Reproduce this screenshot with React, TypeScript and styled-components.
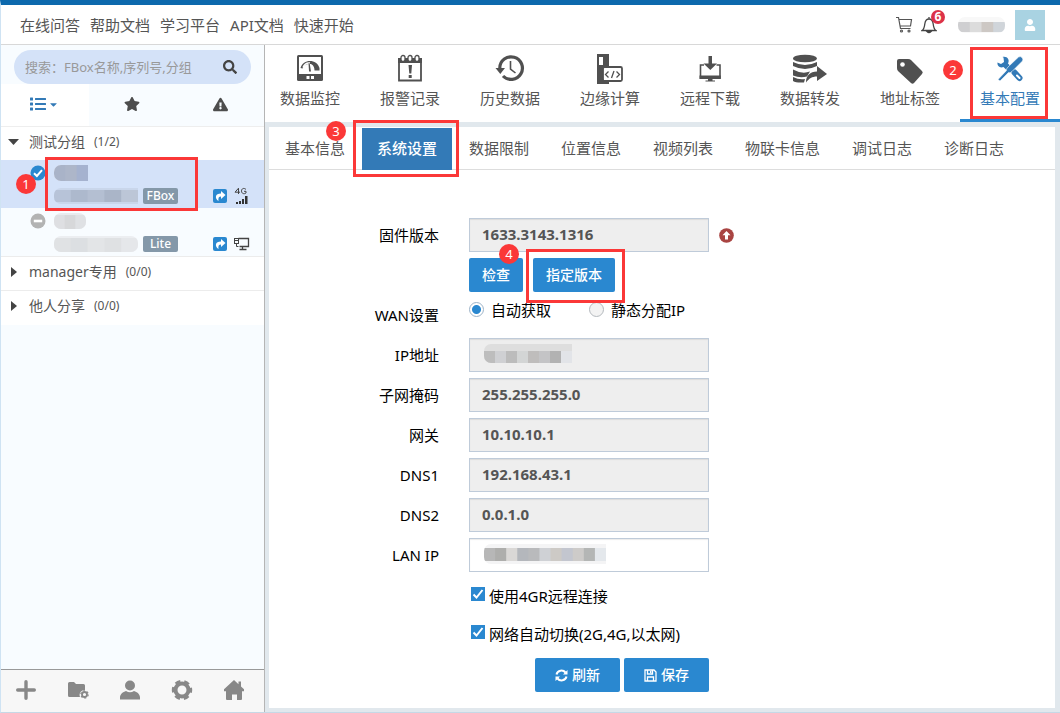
import React from 'react';
import styled, { createGlobalStyle, css } from 'styled-components';
import { FaSearch, FaStar, FaExclamationTriangle, FaList, FaCaretDown, FaUser } from 'react-icons/fa';

const Global = createGlobalStyle`
  *, *::before, *::after { box-sizing: border-box; }
  html, body, #root { height: 100%; }
  body {
    margin: 0;
    background: #e1e8ed;
    color: #555;
    font: 15px/20px "Noto Sans", "Noto Sans CJK SC", sans-serif;
  }
  button, input { font: inherit; color: inherit; }
  button { border: 0; padding: 0; background: none; cursor: pointer; }
  svg { display: block; flex: none; }
`;

const Page = styled.div`
  display: flex;
  flex-direction: column;
  min-height: 100%;
  border-top: 5px solid #0d69ad;
  border-left: 1px solid #cfe3f3;
  border-bottom: 1px solid #c6d8e6;
`;

const Header = styled.header`
  display: flex;
  align-items: center;
  justify-content: space-between;
  height: 40px;
  padding: 0 15px 0 19px;
  background: #fff;
  border-bottom: 1px solid #d8d8d8;
`;

const HeaderLinks = styled.nav`
  display: flex;
  gap: 10px;
  a { color: #555; text-decoration: none; }
`;

const HeaderTools = styled.div`
  display: flex;
  align-items: center;
`;

const Bell = styled.button`
  position: relative;
  margin: 0 21px 0 8px;
`;

const Count = styled.span`
  position: absolute;
  top: -6px;
  left: 10px;
  width: 14px;
  height: 14px;
  border-radius: 50%;
  background: #dc3148;
  color: #fff;
  font-size: 12px;
  font-weight: 700;
  line-height: 14px;
  text-align: center;
`;

const Avatar = styled.span`
  display: grid;
  place-items: center;
  width: 30px;
  height: 30px;
  margin-left: 10px;
  background: #a9d3e2;
  color: #fff;
`;

const Body = styled.div`
  display: flex;
  flex: 1;
`;

const Sidebar = styled.aside`
  display: flex;
  flex-direction: column;
  flex: none;
  width: 264px;
  background: #f8fcff;
  border-right: 1px solid #b5b5b5;
`;

const Search = styled.label`
  display: flex;
  align-items: center;
  height: 34px;
  margin: 5px 13px 0;
  padding: 0 14px 0 11px;
  border-radius: 17px;
  background: #d4e2f8;
  input {
    flex: 1;
    min-width: 0;
    border: 0;
    padding: 0;
    outline: 0;
    background: none;
    font-size: 13px;
  }
  input::placeholder { color: #999; opacity: 1; }
`;

const Filters = styled.div`
  display: grid;
  grid-template-columns: repeat(3, 1fr);
  height: 43px;
  border-bottom: 1px solid #eee;
`;

const Filter = styled.button<{ $active?: boolean }>`
  display: flex;
  align-items: center;
  justify-content: center;
  gap: 2px;
  padding-bottom: 2px;
  background: ${p => (p.$active ? '#fff' : 'none')};
  color: ${p => (p.$active ? '#337ab7' : '#4d4d4d')};
`;

const Group = styled.button<{ $open?: boolean }>`
  display: flex;
  align-items: center;
  width: 100%;
  height: ${p => (p.$open ? '33px' : '34px')};
  padding: 0 0 3px 6px;
  background: #fff;
  border-bottom: ${p => (p.$open ? '0' : '1px')} solid #ececec;
  font-size: 14px;
  &:nth-last-child(2) { border-bottom-color: #fff; }
  svg { width: 12px; margin-right: 10px; }
  small { margin-left: 9px; font-size: 12px; }
`;

const Devices = styled.div`
  border-bottom: 1px solid #ececec;
`;

const Device = styled.div<{ $active?: boolean }>`
  position: relative;
  display: grid;
  grid-template-columns: 24px 89px 35px 1fr 21px 16px;
  grid-template-rows: 16px 16px;
  row-gap: 7px;
  height: 48px;
  padding: 5px 14px 0 29px;
  background: ${p => (p.$active ? '#d4e2f9' : '#f8fcff')};
  > :nth-child(2) { grid-column: 2 / 7; }
  > :nth-child(3) { grid-column: 2; }
  > :nth-child(4) { grid-column: 3; }
  > :nth-child(5) { grid-column: 5; }
  > :nth-child(6) { grid-column: 6; }
`;

const DeviceIcon = styled.span`
  display: flex;
  align-items: center;
`;

const Kind = styled.span`
  height: 16px;
  border-radius: 2px;
  background: #8498a9;
  color: #fff;
  font-size: 12px;
  font-weight: 500;
  line-height: 16px;
  text-align: center;
`;

const SideActions = styled.div`
  display: grid;
  grid-template-columns: repeat(5, 1fr);
  height: 43px;
  margin-top: auto;
  padding: 0 3px 2px 0;
  border-top: 1px solid #999;
  background: #f7f7f7;
  color: #888;
  button { display: grid; place-items: center; padding-right: 3px; }
`;

const Main = styled.main`
  display: flex;
  flex-direction: column;
  flex: 1;
  min-width: 0;
`;

const Tools = styled.nav`
  background: #fff;
  height: 77px;
  ul {
    display: flex;
    height: 100%;
    margin: 0 0 0 -5px;
    padding: 0;
    list-style: none;
  }
`;

const Tool = styled.li<{ $active?: boolean }>`
  position: relative;
  flex: 1;
  a {
    display: flex;
    flex-direction: column;
    align-items: center;
    height: 100%;
    padding-top: 9px;
    text-decoration: none;
    color: ${p => (p.$active ? '#337ab7' : '#555')};
    border-bottom: 3px solid ${p => (p.$active ? '#2a88d0' : 'transparent')};
  }
  svg { margin-bottom: 2px; }
`;

const Panel = styled.section`
  flex: 1;
  margin: 5px 5px 4px 4px;
  background: #fff;
`;

const Tabs = styled.div`
  display: flex;
  height: 43px;
  padding: 1px 0 0 1px;
  gap: 2px;
  border-bottom: 1px solid #ddd;
`;

const TabCell = styled.div`
  position: relative;
  display: flex;
`;

const Tab = styled.button<{ $active?: boolean }>`
  padding: 0 15px 2px;
  height: 42px;
  white-space: nowrap;
  ${p => p.$active && css`
    background: #337ab7;
    color: #fff;
    font-weight: 500;
  `}
`;

const Form = styled.form`
  display: flex;
  flex-direction: column;
  gap: 6px;
  padding-top: 48px;
  color: #000;
`;

const Row = styled.div`
  display: grid;
  grid-template-columns: 170px 240px 16px;
  column-gap: 30px;
  align-items: center;
  min-height: 34px;
  > label, > span:first-child { text-align: right; }
  > svg { margin-left: -20px; }
`;

const Field = styled.div`
  position: relative;
  grid-column: 2;
  > svg { position: absolute; top: 6px; left: 15px; }
`;

const Text = styled.input`
  width: 100%;
  height: 34px;
  padding: 0 12px 2px;
  border: 1px solid #bfcbd9;
  background: #fff;
  box-shadow: inset 0 1px 1px rgba(0, 0, 0, 0.08);
  color: #555;
  font-size: 15px;
  font-weight: 700;
  display: block;
  &:read-only { background: #eee; }
`;

const Buttons = styled.div<{ $end?: boolean }>`
  grid-column: 2;
  display: flex;
  gap: ${p => (p.$end ? '4px' : '10px')};
  justify-content: ${p => (p.$end ? 'flex-end' : 'flex-start')};
`;

const ButtonCell = styled.div`
  position: relative;
`;

const Button = styled.button<{ $wide?: boolean }>`
  display: flex;
  align-items: center;
  justify-content: center;
  gap: 4px;
  height: 34px;
  padding: 0 13px;
  min-width: ${p => (p.$wide ? '85px' : '54px')};
  border-radius: 2px;
  background: #2a88d0;
  color: #fff;
  font-size: 14px;
  font-weight: 500;
`;

const Radios = styled.div`
  display: flex;
  gap: 38px;
  height: 34px;
  padding-top: 2px;
  label { display: flex; gap: 7px; white-space: nowrap; }
`;

const Radio = styled.input`
  appearance: none;
  width: 15px;
  height: 15px;
  margin: 2px 0 0;
  border: 1px solid #b4b9be;
  border-radius: 50%;
  background: #f3f3f3;
  &:checked { background: radial-gradient(circle, #2a88d0 0 4px, #fff 5px); border-color: #9db3c8; }
`;

const Check = styled.label`
  display: flex;
  align-items: flex-end;
  gap: 4px;
  grid-column: 2 / 4;
  padding: 1px 0 0 2px;
`;

const Tick = styled.span`
  display: grid;
  width: 14px;
  height: 14px;
  margin-bottom: 5px;
  > * { grid-area: 1 / 1; }
  input { appearance: none; margin: 0; border: 1px solid #2a88d0; }
  input:checked { background: #2a88d0; }
  svg { pointer-events: none; }
`;

const Checks = styled.div`
  display: flex;
  flex-direction: column;
  gap: 4px;
  margin-bottom: 2px;
`;

const Frame = styled.span<{ $top: number; $right: number; $bottom: number; $left: number }>`
  position: absolute;
  z-index: 2;
  top: ${p => p.$top}px;
  right: ${p => p.$right}px;
  bottom: ${p => p.$bottom}px;
  left: ${p => p.$left}px;
  border: 3px solid #fb3838;
  pointer-events: none;
`;

const Step = styled.span<{ $top: number; $left: number }>`
  position: absolute;
  z-index: 3;
  top: ${p => p.$top}px;
  left: ${p => p.$left}px;
  width: 20px;
  height: 20px;
  border-radius: 50%;
  background: #fb3838;
  color: #fff;
  font-size: 13px;
  line-height: 20px;
  text-align: center;
`;

/* Masked value: a strip of flat tiles over a paler strip, rounded on the left. */
function Mask({ width, height, tiles, top = 2, bottom = 0, halo = '#ececec', round }: {
  width: number; height: number; tiles: string[]; top?: number; bottom?: number; halo?: string; round?: boolean;
}) {
  const id = React.useId();
  const w = width / tiles.length;
  return (
    <svg width={width} height={height} aria-hidden="true">
      <clipPath id={id}><rect width={round ? width : width + 10} height={height} rx="7" /></clipPath>
      <g clipPath={`url(#${id})`}>
        <rect width={width} height={height} fill={halo} />
        {tiles.map((c, i) => (
          <rect key={i} x={i * w} y={top} width={w + 1} height={height - top - bottom} fill={c} />
        ))}
      </g>
    </svg>
  );
}

const Caret = ({ open }: { open?: boolean }) => (
  <svg height="12" viewBox="0 0 12 12" fill="#444"><path d={open ? 'M1 3h11L6.500 9z' : 'M4 1v10l6-5z'} /></svg>
);

const Share = () => (
  <svg width="14" height="14" viewBox="0 0 14 14">
    <rect width="14" height="14" rx="2" fill="#2a88d0" />
    <path d="M8 2 12.500 6 8 10V7.600C5.800 7.600 5 9 5.500 12 1.500 9 2 4.400 8 4.400z" fill="#fff" />
  </svg>
);

const Signal = () => (
  <svg width="16" height="18" viewBox="0 0 16 18">
    <path d="M4.500 7V1.200L1 5.200h5M12 2.500C10 .5 7.500 1.500 7.500 4s2.500 3.500 4.500 2V4.300H10" fill="none" stroke="#444" />
    <path d="M2 15h2v2H2zM5 14h2v3H5zM8 12h2v5H8zM11 9h2.500v8H11z" fill="#333" />
  </svg>
);

const Lan = () => (
  <svg width="16" height="14" viewBox="0 0 16 14" fill="none" stroke="#444">
    <path d="M4.500 1.500h10v8h-9M8.500 9.500v3M5.500 12.500h7" strokeWidth="1.300" /><rect x=".5" y="1.500" width="4" height="5" /><path d="M2.500 6.500v3h2M1 3.500h3" />
  </svg>
);

const Disc = ({ on }: { on?: boolean }) => (
  <svg width="16" height="16" viewBox="0 0 16 16">
    <circle cx="8" cy="8" r="7.500" fill={on ? '#2a88d0' : '#b3b3b3'} />
    <path d={on ? 'M4 8.200l2.900 2.800L12 5.200' : 'M3.800 8h8.400'} fill="none" stroke="#fff" strokeWidth={on ? 2 : 2.6} />
  </svg>
);

const g = '#505050';
const icons: Record<string, React.ReactNode> = {
  monitor: <><path d="M3 2.500Q3 1 4.500 1h23Q29 1 29 2.500v23q0 1.500-1.500 1.500h-23Q3 27 3 25.500z" fill={g} /><path d="M5 3h22v17H5z" fill="#fff" /><path d="M6.500 14C9 4.500 23 4.500 25.500 14v2.500h-5c0-4-2-6.500-4.500-6.500-3.500-.5-6 1-7.500 4.500z" fill={g} /><path d="M9 13.500c1.500-3.500 4-5 7-4.500" fill="none" stroke="#fff" strokeWidth="1.500" /><path d="M14.500 9.500h1.200l1.300 8h-2z" fill={g} /><path d="M12.500 22h3v3h-3zM17 22h3v3h-3z" fill="#fff" /></>,
  alarm: <><path d="M5 6h22v20.500H5z" fill="none" stroke={g} strokeWidth="1.800" /><path d="M4 4h24v5H4z" fill={g} /><g fill="#fff" stroke={g} strokeWidth="1.300"><rect x="7" y="1.500" width="4" height="6" rx="2" /><rect x="14" y="1.500" width="4" height="6" rx="2" /><rect x="21" y="1.500" width="4" height="6" rx="2" /></g><path d="M14.500 11h3.500l-.7 8.500h-2zM14.700 21h3v3h-3z" fill={g} /></>,
  history: <><path d="M5.800 14A11.300 11.300 0 1 1 9 22" fill="none" stroke={g} strokeWidth="3.200" /><path d="M1.500 14h9.500l-4.700 6z" fill={g} /><path d="M16.500 7v8l5 4" fill="none" stroke={g} strokeWidth="1.600" /></>,
  edge: <><path d="M3 0h12v30H3z" fill={g} /><path d="M5 3h4v8H5z" fill="#fff" /><rect x="9" y="13" width="19" height="14" rx="1.500" fill="#fff" stroke={g} strokeWidth="1.800" /><path d="M14.500 17.500 11.500 20.500l3 3M22.500 17.500l3 3-3 3M20 17l-2.500 7" fill="none" stroke={g} strokeWidth="1.300" /></>,
  download: <><path d="M10 11H6.500v13h19.500V11H22.500" fill="none" stroke={g} strokeWidth="1.600" /><path d="M5.500 21.500h21.300V25H5.500zM14 25h4.500v1.500H21v1h-9.500v-1H14zM14.500 2h3.500v7.500h5L16.300 16 9.500 9.500h5z" fill={g} /></>,
  forward: <><ellipse cx="13" cy="4.500" rx="12" ry="3.800" fill={g} /><path d="M1 8q12 6 24 0v4q-12 6-24 0zM1 15.500q9 5 17 2l-3 5q-7 2-14-1zM1 23q6 3 12 2l-1 3.500Q4 29 1 27z" fill={g} /><path d="M25 12l10 8-10 7v-4.500c-5 0-8 2-11 6 0-7 4-11 11-11z" fill={g} /></>,
  tag: <><path d="M3 7q0-2 2-2h9q2 0 3 1l11 11q1.500 1.500 0 3l-8 9q-1.500 1.500-3 0L4 17q-1-1-1-3z" fill={g} /><circle cx="8.500" cy="10.500" r="2.300" fill="#fff" /></>,
  config: <><path d="M3.500 8.500 7 10l3-2-.5-4.500L8.500 3c5-1 7.500 3 5.500 6.500l3 3-4 4-3.500-3.500C6 14.500 3 12 3.500 8.500z" fill="#337ab7" /><path d="m20.500 18.500 5 5.500" stroke="#337ab7" strokeWidth="6" strokeLinecap="round" /><path d="m23 21.500 2.500 2.500" stroke="#fff" strokeWidth="2" strokeLinecap="round" /><path d="M24.500 3q2-1 3.500.5t.5 3.500L18 17.500q-2 2-3.500 1L6 27l-2-1.500 8.500-9Q12 15 14 13z" fill="#337ab7" stroke="#fff" strokeWidth=".6" /></>,
};

const tools = [
  ['数据监控', 'monitor'], ['报警记录', 'alarm'], ['历史数据', 'history'], ['边缘计算', 'edge'],
  ['远程下载', 'download'], ['数据转发', 'forward'], ['地址标签', 'tag'], ['基本配置', 'config'],
];
const tabs = ['基本信息', '系统设置', '数据限制', '位置信息', '视频列表', '物联卡信息', '调试日志', '诊断日志'];
const network = [['子网掩码', '255.255.255.0'], ['网关', '10.10.10.1'], ['DNS1', '192.168.43.1'], ['DNS2', '0.0.1.0']];

export default function App() {
  return (
    <Page>
      <Global />
      <Header>
        <HeaderLinks>
          {['在线问答', '帮助文档', '学习平台', 'API文档', '快速开始'].map(t => <a key={t} href="#">{t}</a>)}
        </HeaderLinks>
        <HeaderTools>
          <button aria-label="购物车">
            <svg width="18" height="18" viewBox="0 0 18 18" fill="none" stroke="#555" strokeWidth="1.200"><path d="M1 1.500h2.500l2 11h10M4 3.500h12.500l-1 6.500H5.200" /><circle cx="6.500" cy="15" r="1" /><circle cx="14" cy="15" r="1" /></svg>
          </button>
          <Bell aria-label="通知">
            <svg width="16" height="18" viewBox="0 0 16 18" fill="none" stroke="#444" strokeWidth="1.300"><path d="M8 1v2M1 14.500c2.300-1.500 2.500-3.500 2.800-6.500C4.200 4.500 6 3 8 3s3.800 1.500 4.200 5c.3 3 .5 5 2.800 6.500z" /><path d="M6 15.500q2 2 4 0z" fill="#444" /></svg>
            <Count>6</Count>
          </Bell>
          <Mask width={47} height={16} top={5} bottom={1} halo="#f8f8f8" round tiles={['#cfcfd1', '#dcdcdc', '#cdc8c4', '#d0d5da']} />
          <Avatar><FaUser size={12} /></Avatar>
        </HeaderTools>
      </Header>
      <Body>
        <Sidebar>
          <Search>
            <input type="search" aria-label="搜索" placeholder="搜索：FBox名称,序列号,分组" />
            <FaSearch size={14} color="#444" />
          </Search>
          <Filters>
            <Filter $active aria-label="列表"><FaList size={16} /><FaCaretDown size={11} /></Filter>
            <Filter aria-label="收藏"><FaStar size={16} /></Filter>
            <Filter aria-label="报警"><FaExclamationTriangle size={15} /></Filter>
          </Filters>
          <Group $open><Caret open />测试分组<small>(1/2)</small></Group>
          <Devices>
            <Device $active>
              <DeviceIcon><Disc on /></DeviceIcon>
              <Mask width={34} height={16} top={0} tiles={['#a9b3c8', '#adb6c9', '#a5b2cf']} />
              <Mask width={84} height={16} bottom={2} tiles={['#b7c3d8', '#adb9cd', '#b4bfd2', '#aab5c8', '#bcc6d7']} halo="#c9d6eb" />
              <Kind>FBox</Kind>
              <DeviceIcon><Share /></DeviceIcon>
              <DeviceIcon><Signal /></DeviceIcon>
              <Frame $top={-3} $right={66} $bottom={-3} $left={44} />
              <Step $top={14} $left={15}>1</Step>
            </Device>
            <Device>
              <DeviceIcon><Disc /></DeviceIcon>
              <Mask width={32} height={16} round tiles={['#dedfe2', '#d7d8da', '#dfe1e4']} halo="#e9ebee" />
              <Mask width={84} height={16} round tiles={['#e0e2e4', '#dcdfe2', '#e3e5e7', '#dfe1e3', '#e5e7ea']} halo="#eceef1" />
              <Kind>Lite</Kind>
              <DeviceIcon><Share /></DeviceIcon>
              <DeviceIcon><Lan /></DeviceIcon>
            </Device>
          </Devices>
          <Group><Caret />manager专用<small>(0/0)</small></Group>
          <Group><Caret />他人分享<small>(0/0)</small></Group>
          <SideActions>
            <button aria-label="添加"><svg width="20" height="20" viewBox="0 0 20 20" stroke="#888" strokeWidth="3.400" strokeLinecap="round"><path d="M10 1.700v16.600M1.700 10h16.600" /></svg></button>
            <button aria-label="分组管理"><svg width="22" height="18" viewBox="0 0 22 18" fill="#888"><path d="M1 2.500Q1 1 2.500 1H7l2 2h7.500Q18 3 18 4.500V9a5 5 0 0 0-5 7H2.500Q1 16 1 14.500z" /><circle cx="17.500" cy="13.500" r="2.500" fill="none" stroke="#888" strokeWidth="1.800" /><circle cx="17.500" cy="13.500" r="3.700" fill="none" stroke="#888" strokeWidth="1.200" strokeDasharray="1.900 2" /></svg></button>
            <button aria-label="用户"><svg width="20" height="20" viewBox="0 0 20 20" fill="#888"><circle cx="10" cy="5.500" r="5" /><path d="M0 19.500v-2C0 14 3 12 6 11q4 2.500 8 0c3 1 6 3 6 6.500v2z" /></svg></button>
            <button aria-label="设置"><svg width="22" height="22" viewBox="0 0 22 22" fill="none" stroke="#888"><circle cx="11" cy="11" r="6.500" strokeWidth="4" /><circle cx="11" cy="11" r="8.900" strokeWidth="2.600" strokeDasharray="5.300 4.020" strokeDashoffset="2.600" /></svg></button>
            <button aria-label="首页"><svg width="20" height="20" viewBox="0 0 20 20" fill="#888"><path d="M10 0l4.500 4.200V1.500H17v5L20 9.300v2h-2V19q0 1-1 1h-4v-5.500H8V20H3q-1 0-1-1v-7.700H0v-2z" /></svg></button>
          </SideActions>
        </Sidebar>
        <Main>
          <Tools>
            <ul>
              {tools.map(([name, icon]) => (
                <Tool key={name} $active={icon === 'config'}>
                  <a href="#">
                    <svg width={icon === 'forward' ? 36 : 32} height="32" viewBox={icon === 'forward' ? '0 0 36 32' : '0 0 32 32'}>{icons[icon]}</svg>
                    {name}
                  </a>
                  {icon === 'config' && <><Frame $top={2} $right={12} $bottom={3} $left={10} /><Step $top={15} $left={-17}>2</Step></>}
                </Tool>
              ))}
            </ul>
          </Tools>
          <Panel>
            <Tabs role="tablist">
              {tabs.map((t, i) => (
                <TabCell key={t}>
                  <Tab role="tab" aria-selected={i === 1} $active={i === 1}>{t}</Tab>
                  {i === 1 && <Frame $top={-8} $right={-7} $bottom={-8} $left={-9} />}
                  {i === 0 && <Step $top={-7} $left={56}>3</Step>}
                </TabCell>
              ))}
            </Tabs>
            <Form onSubmit={e => e.preventDefault()}>
              <Row>
                <label htmlFor="fw">固件版本</label>
                <Text id="fw" readOnly defaultValue="1633.3143.1316" />
                <svg width="15" height="15" viewBox="0 0 15 15"><circle cx="7.500" cy="7.500" r="7.300" fill="#a94442" /><path d="M7.500 3 11.500 7.300H9V11.500H6V7.300H3.500z" fill="#fff" /></svg>
              </Row>
              <Row>
                <Buttons>
                  <ButtonCell><Button type="button">检查</Button><Step $top={-14} $left={30}>4</Step></ButtonCell>
                  <ButtonCell><Button type="button">指定版本</Button><Frame $top={-9} $right={-10} $bottom={-11} $left={-7} /></ButtonCell>
                </Buttons>
              </Row>
              <Row role="radiogroup" aria-labelledby="wan">
                <span id="wan">WAN设置</span>
                <Radios>
                  <label><Radio type="radio" name="wan" defaultChecked />自动获取</label>
                  <label><Radio type="radio" name="wan" />静态分配IP</label>
                </Radios>
              </Row>
              <Row>
                <label htmlFor="ip">IP地址</label>
                <Field>
                  <Text id="ip" readOnly />
                  <Mask width={88} height={19} top={7} halo="#dedede" tiles={['#bdbdbd', '#cfd0d3', '#bcbcbc', '#d3d5d5', '#bfbdbc', '#c4c4c6', '#b2b2b2', '#e2e4e8']} />
                </Field>
              </Row>
              {network.map(([label, value]) => (
                <Row key={label}>
                  <label htmlFor={label}>{label}</label>
                  <Text id={label} readOnly defaultValue={value} />
                </Row>
              ))}
              <Row>
                <label htmlFor="lan">LAN IP</label>
                <Field>
                  <Text id="lan" />
                  <Mask width={122} height={20} top={4} bottom={3} halo="#f4f4f5" tiles={['#b7b7b7', '#aeaeac', '#dad8d6', '#b4b7bc', '#b9babc', '#cfd1d5', '#cdcac6', '#c3c6cf', '#cdcbc9', '#b4b6b5', '#e4e8ec']} />
                </Field>
              </Row>
              <Checks>
                {['使用4GR远程连接', '网络自动切换(2G,4G,以太网)'].map(t => (
                  <Row key={t}>
                    <Check>
                      <Tick>
                        <input type="checkbox" defaultChecked />
                        <svg width="14" height="14" viewBox="0 0 14 14"><path d="m2.500 7.500 3 3 6-7.500" fill="none" stroke="#fff" strokeWidth="2" /></svg>
                      </Tick>
                      {t}
                    </Check>
                  </Row>
                ))}
              </Checks>
              <Row>
                <Buttons $end>
                  <Button type="button" $wide>
                    <svg width="13" height="13" viewBox="0 0 13 13" fill="none" stroke="#fff" strokeWidth="2"><path d="M1.500 5.500C2.500 1 8 .5 10.500 3.500M11.500 7.500C10.500 12 5 12.500 2.500 9.500" /><path d="M12.500 1v4.500H8zM.5 12V7.500H5z" fill="#fff" stroke="none" /></svg>
                    刷新
                  </Button>
                  <Button type="submit" $wide>
                    <svg width="13" height="13" viewBox="0 0 13 13" fill="none" stroke="#fff" strokeWidth="1.300"><path d="M1 1h9l2 2v9H1zM3.500 1v4h5V1M3.500 12V8h6v4M6.700 2v2" /></svg>
                    保存
                  </Button>
                </Buttons>
              </Row>
            </Form>
          </Panel>
        </Main>
      </Body>
    </Page>
  );
}
